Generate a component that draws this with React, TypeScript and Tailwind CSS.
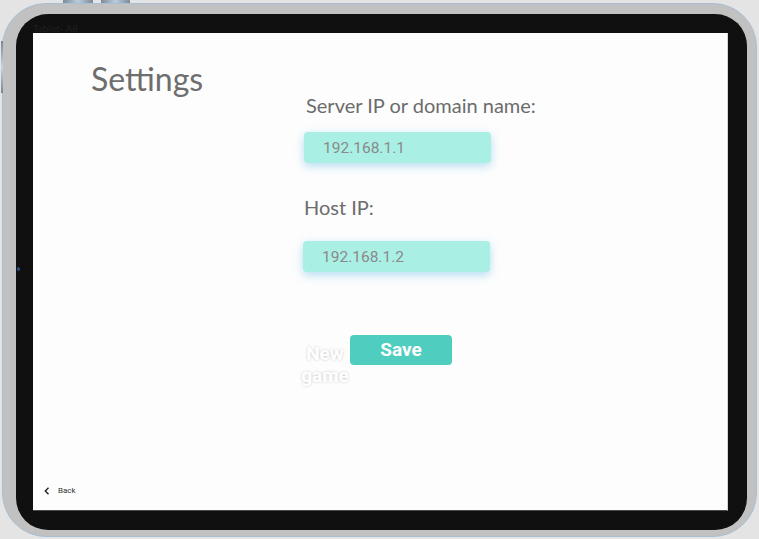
import { useState } from "react";

function Field({ value }: { value: string }) {
    const [v, setV] = useState(value);
    return (
        <input
            className="w-[187px] h-[31px] rounded-[4px] bg-[#a9efe4] pl-[19px] text-[15.5px] text-[#8a8a8a] outline-none shadow-[0_3px_10px_rgba(130,200,235,0.6)] [font-family:Roboto,sans-serif]"
            value={v}
            onChange={(e) => setV(e.target.value)}
        />
    );
}

export default function App() {
    return (
        <div className="relative w-[759px] h-[539px] overflow-hidden bg-[#e4e4e4]">
            {/* hardware buttons */}
            <div className="absolute left-[63px] top-0 w-[30px] h-[3px] bg-gradient-to-r from-[#7f8a96] via-[#b9cde0] to-[#7f8a96]" />
            <div className="absolute left-[101px] top-0 w-[29px] h-[3px] bg-gradient-to-r from-[#7f8a96] via-[#b9cde0] to-[#7f8a96]" />
            <div className="absolute left-[1px] top-[41px] w-[2px] h-[52px] bg-gradient-to-b from-[#7c8590] via-[#c4d6e6] to-[#7c8590]" />

            <div className="ml-[2px] mt-[3px] w-[755px] h-[534px] rounded-[44px] border border-[#a8bfd4] bg-[#c1c1c1] pl-[13px] pt-[10px]">
                <div className="relative w-[731px] h-[516px] rounded-[32px] bg-[#101010] pl-[17px] pt-[19px]">
                    <span className="absolute left-[17px] top-[7px] text-[10px] text-[#1f1f1f] [font-family:Lato,sans-serif]">
                        Tablet- A8
                    </span>
                    <div className="absolute left-[1px] top-[253px] w-[3px] h-[4px] rounded-full bg-[#2a4c86]" />

                    <div className="flex flex-col w-[695px] h-[478px] bg-[#fdfdfd] border-r border-[#d4d4d4] border-b border-b-[#4a4a4a]">
                        <div className="flex">
                            <div className="w-[271px] pl-[58px] pt-[26px]">
                                <h1 className="text-[32px] leading-[40px] text-[#6e6e6e] [font-family:Lato,sans-serif]">
                                    Settings
                                </h1>
                            </div>
                            <div className="flex flex-col pt-[60px] [font-family:Lato,sans-serif]">
                                <label className="pl-[2px] text-[20px] leading-[24px] text-[#6c6c6c]">
                                    Server IP or domain name:
                                </label>
                                <div className="mt-[15px]">
                                    <Field value="192.168.1.1" />
                                </div>
                                <label className="mt-[32px] text-[20px] leading-[24px] text-[#6c6c6c]">
                                    Host IP:
                                </label>
                                <div className="mt-[22px] -ml-[1px]">
                                    <Field value="192.168.1.2" />
                                </div>
                                <div className="mt-[63px] -ml-[4px] flex items-start [font-family:Roboto,sans-serif]">
                                    <div className="w-[50px] mt-[8px] text-center text-[19px] leading-[22px] font-bold text-white [text-shadow:0_0_3px_rgba(0,0,0,0.2)]">
                                        New game
                                    </div>
                                    <button className="w-[102px] h-[30px] rounded-[4px] bg-[#4fcdbf] text-[19px] font-bold text-white">
                                        Save
                                    </button>
                                </div>
                            </div>
                        </div>

                        <div className="mt-auto mb-[13px] ml-[11px] flex items-center gap-[8px] [font-family:Roboto,sans-serif]">
                            <svg width="6" height="8" viewBox="0 0 6 8">
                                <polyline points="4.5,0.8 1.3,4 4.5,7.2" fill="none" stroke="#222" strokeWidth="1.4" />
                            </svg>
                            <span className="text-[8px] text-[#333]">Back</span>
                        </div>
                    </div>
                </div>
            </div>
        </div>
    );
}
